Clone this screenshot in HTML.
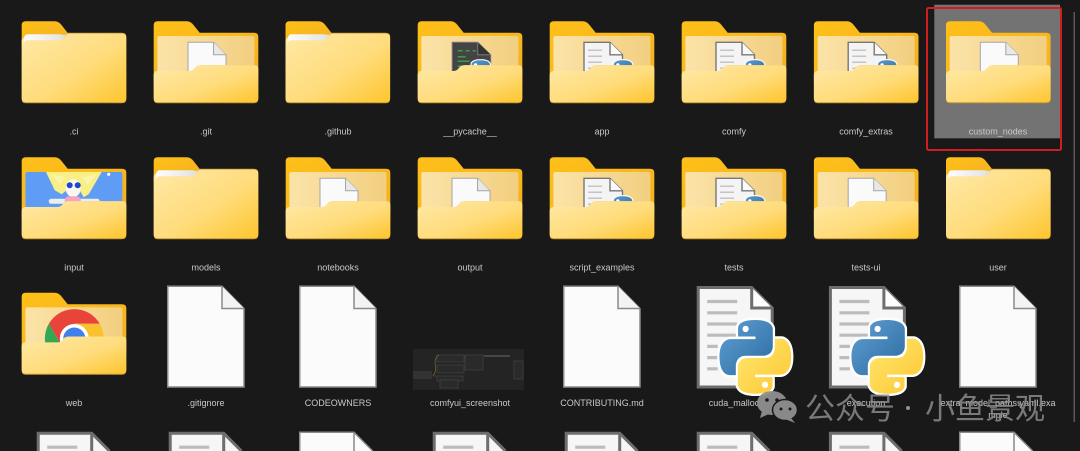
<!DOCTYPE html>
<html><head><meta charset="utf-8">
<style>
html,body{margin:0;padding:0;background:#191919;width:1080px;height:451px;overflow:hidden}
svg{display:block;filter:blur(.35px)}
.l text{font-family:"Liberation Sans",sans-serif;font-size:9px;fill:#c9c9c9;text-anchor:middle}
.w{font-family:"Liberation Sans","Noto Sans CJK SC",sans-serif;font-size:30px;fill:#8a8a8a;opacity:.85}
</style></head><body>
<svg width="1080" height="451" viewBox="0 0 1080 451" xmlns="http://www.w3.org/2000/svg">
<defs>
<linearGradient id="gf" x1="0" y1="0" x2="1" y2="1"><stop offset="0" stop-color="#ffe9a6"/><stop offset=".55" stop-color="#ffdc7c"/><stop offset="1" stop-color="#fec62e"/></linearGradient>
<linearGradient id="gt" x1="0" y1="0" x2="1" y2="1"><stop offset="0" stop-color="#fec018"/><stop offset="1" stop-color="#f4b021"/></linearGradient>
<linearGradient id="gp" x1="0" y1="0" x2="1" y2="0"><stop offset="0" stop-color="#fbe3a8"/><stop offset="1" stop-color="#f2cf80"/></linearGradient>
<linearGradient id="gb" x1="0" y1="0" x2="1" y2="1"><stop offset="0" stop-color="#5fa0d4"/><stop offset="1" stop-color="#2c6a9f"/></linearGradient>
<linearGradient id="gy" x1="0" y1="0" x2="1" y2="1"><stop offset="0" stop-color="#ffe873"/><stop offset="1" stop-color="#fdc62f"/></linearGradient>
<linearGradient id="gs" x1="0" y1="0" x2="1" y2="0"><stop offset="0" stop-color="#fdfdfd"/><stop offset=".8" stop-color="#e6e6e6"/><stop offset="1" stop-color="#f5d98a"/></linearGradient>

<g id="back">
<path d="M0 4Q0 0 4 0H33Q37 0 40 4L46 11.5H100Q104.6 11.5 104.6 15V60H0Z" fill="url(#gt)"/>
<rect x="3.7" y="14.7" width="97" height="45" rx="2" fill="url(#gp)"/>
</g>
<g id="front">
<path d="M0 54Q0 50 4 50H36Q39 50 41 47.2Q43 44 47 44H101Q104.6 44 104.6 48V78Q104.6 82 100 82H4Q0 82 0 78Z" fill="#c79a30"/>
<path d="M0 53.5Q0 49.7 4 49.7H36Q39 49.7 41 47Q43 43.8 47 43.8H101Q104.6 43.8 104.6 47.5V77Q104.6 81 100 81H4Q0 81 0 77Z" fill="url(#gf)"/>
</g>
<g id="closed">
<path d="M0 4Q0 0 4 0H33Q37 0 40 4L47 13H40V24H0Z" fill="url(#gt)"/>
<path d="M0 20Q0 16 4 16H40L46 11.5H100Q104.6 11.5 104.6 15V78Q104.6 82 100 82H4Q0 82 0 78Z" fill="#c79a30"/>
<path d="M0 20Q0 16 4 16H40L46 12.2H100Q104.6 12.2 104.6 16V77Q104.6 81 100 81H4Q0 81 0 77Z" fill="url(#gf)"/>
<path d="M2 20Q2 13 6 13H46Q44 18.5 38 19H6Q3 19 2 22Z" fill="url(#gs)"/>
</g>
<g id="mb">
<path d="M0 0H25.5L38 12.5V50H0Z" fill="#fafafa" stroke="#a5a5a5" stroke-width="1"/>
<path d="M25.5 0V12.5H38" fill="#e8e8e8" stroke="#a5a5a5" stroke-width="1"/>
</g>
<g id="mp">
<path d="M0 0H26L38.5 12.5V50H0Z" fill="#f4f4f4" stroke="#777" stroke-width="1.4"/>
<path d="M26 0V12.5H38.5" fill="#fafafa" stroke="#777" stroke-width="1.4"/>
<path d="M4 8H18M4 14H18M4 20H18M4 26H10M4 31H10" stroke="#c4c4c4" stroke-width="1.5"/>
<use href="#py" transform="translate(20 18) scale(.345)"/>
</g>
<g id="py">
<path d="M54.9 0C26.9 0 28.6 12.1 28.6 12.1v12.6h26.7v3.8H18C18 28.5 0 26.4 0 54.8c0 28.4 15.7 27.4 15.7 27.4h9.4V69s-.5-15.7 15.4-15.7h26.6s14.9.2 14.9-14.4V14.8S84.3 0 54.9 0z" fill="#fff" stroke="#fff" stroke-width="7" stroke-linejoin="round"/>
<path d="M55.3 110c28 0 26.3-12.1 26.3-12.1V85.3H54.9v-3.8h37.3s18 2 18-26.3c0-28.4-15.7-27.4-15.7-27.4h-9.4V41s.5 15.7-15.4 15.7H43.1s-14.9-.2-14.9 14.4v24.1S26 110 55.3 110z" fill="#fff" stroke="#fff" stroke-width="7" stroke-linejoin="round"/>
<path d="M54.9 0C26.9 0 28.6 12.1 28.6 12.1v12.6h26.7v3.8H18C18 28.5 0 26.4 0 54.8c0 28.4 15.7 27.4 15.7 27.4h9.4V69s-.5-15.7 15.4-15.7h26.6s14.9.2 14.9-14.4V14.8S84.3 0 54.9 0z" fill="url(#gb)"/>
<path d="M55.3 110c28 0 26.3-12.1 26.3-12.1V85.3H54.9v-3.8h37.3s18 2 18-26.3c0-28.4-15.7-27.4-15.7-27.4h-9.4V41s.5 15.7-15.4 15.7H43.1s-14.9-.2-14.9 14.4v24.1S26 110 55.3 110z" fill="url(#gy)"/>
<circle cx="40.2" cy="13.3" r="4.8" fill="#fff"/><circle cx="70" cy="96.7" r="4.8" fill="#fff"/>
</g>
<g id="fb"><use href="#back"/><use href="#mb" transform="translate(34.3 21)"/><use href="#front"/></g>
<g id="fp"><use href="#back"/><use href="#mp" transform="translate(34.3 21)"/><use href="#front"/></g>
<g id="blank">
<path d="M.75.75H55L77 23V101.5H.75Z" fill="#fbfbfb" stroke="#8a8a8a" stroke-width="1.5"/>
<path d="M55 .75V23H77" fill="#f3f3f3" stroke="#8a8a8a" stroke-width="1.5"/>
</g>
<g id="pdoc">
<path d="M1.5 1.5H55L75.5 22V101H1.5Z" fill="#f6f6f6" stroke="#6d6d6d" stroke-width="3"/>
<path d="M55 1.5V22H75.5" fill="#fdfdfd" stroke="#6d6d6d" stroke-width="3"/>
<path d="M10.5 15.5H40.5M10.5 26.8H40.5M10.5 38H40.5M10.5 49.2H40.5M10.5 60.4H21M10.5 71.6H21M10.5 82.8H21" stroke="#bcbcbc" stroke-width="3.2"/>
</g>
<g id="blank4">
<path d="M.75 19.5V.75H55L73.7 19.5Z" fill="#fbfbfb"/>
<path d="M.75 19.5V.75H55L73.7 19.5" fill="none" stroke="#8a8a8a" stroke-width="1.5"/>
<path d="M55 .75V19.5" stroke="#8a8a8a" stroke-width="1.5"/>
</g>
<g id="pdoc4">
<path d="M1.5 19.3V1.5H55L72.8 19.3Z" fill="#f6f6f6"/>
<path d="M1.5 19.3V1.5H55L72.8 19.3" fill="none" stroke="#6d6d6d" stroke-width="3"/>
<path d="M55 1.5V19.3" stroke="#6d6d6d" stroke-width="3"/>
<path d="M10.5 15.5H40.5" stroke="#bcbcbc" stroke-width="3.2"/>
</g>
</defs>

<rect width="1080" height="451" fill="#191919"/>
<rect x="934.3" y="4.7" width="125.7" height="133.6" fill="#737373"/>
<rect x="927" y="8" width="134" height="142" rx="1.5" fill="none" stroke="#cf1f1c" stroke-width="2"/>
<rect x="1073.6" y="12" width="1.2" height="410" fill="#6a6a6a"/>

<!-- row 1 -->
<use href="#closed" transform="translate(21.7 21.3)"/>
<use href="#fb" transform="translate(153.7 21.3)"/>
<use href="#closed" transform="translate(285.5 21.3)"/>
<g transform="translate(417.7 21.3)">
<use href="#back"/>
<path d="M34.5 21H60L73 33.5V55H34.5Z" fill="#444" stroke="#7a7a7a" stroke-width="1"/>
<path d="M60 21V33.5H73" fill="#333" stroke="#7a7a7a" stroke-width="1"/>
<path d="M40 29.5H45M48 29.5H52M55 29.5H58M40 35.5H48M40 40H52M40 45H50" stroke="#35a044" stroke-width="1.5"/>
<use href="#py" transform="translate(44 39) scale(.345)"/>
<use href="#front"/>
</g>
<use href="#fp" transform="translate(549.7 21.3)"/>
<use href="#fp" transform="translate(681.7 21.3)"/>
<use href="#fp" transform="translate(813.9 21.3)"/>
<use href="#fb" transform="translate(946 21.3)"/>

<!-- row 2 -->
<g transform="translate(21.7 157.3)">
<use href="#back"/>
<rect x="3.7" y="14.7" width="97" height="45" rx="2" fill="#5e9cf6"/>
<path d="M24.3 14.7H80L67 37L62 40L58 33H45L40 37L33 33Z" fill="#f8ef86"/>
<path d="M30 17L38 27L44 20ZM75 17L66 27L60 20Z" fill="#fbf5a8"/>
<ellipse cx="51.5" cy="31" rx="7.5" ry="9" fill="#fdf6ee"/>
<circle cx="48" cy="28" r="3" fill="#1a48cf"/><circle cx="56" cy="28" r="3" fill="#1a48cf"/>
<rect x="27" y="41.5" width="51" height="5" rx="2.5" fill="#eeeeee"/>
<rect x="43" y="39" width="16" height="12" rx="4" fill="#f2a6c4"/>
<circle cx="87" cy="17" r="1.6" fill="#fff"/>
<use href="#front"/>
</g>
<use href="#closed" transform="translate(153.7 157.3)"/>
<use href="#fb" transform="translate(285.7 157.3)"/>
<use href="#fb" transform="translate(417.7 157.3)"/>
<use href="#fp" transform="translate(549.7 157.3)"/>
<use href="#fp" transform="translate(681.7 157.3)"/>
<use href="#fb" transform="translate(813.9 157.3)"/>
<use href="#closed" transform="translate(946 157.3)"/>

<!-- row 3 -->
<g transform="translate(21.7 292.7)">
<use href="#back"/>
<g transform="translate(52.6 45.8)">
<path d="M-25.5 -14.7A29.5 29.5 0 0 1 25.5 -14.7H0L-12.7 7.3Z" fill="#e8443a"/>
<path d="M-25.5 -14.7A29.5 29.5 0 0 0 0 29.5L12.7 7L-12.7 7.3Z" fill="#33a853"/>
<path d="M25.5 -14.7A29.5 29.5 0 0 1 0 29.5L12.7 7L0 -14.7Z" fill="#fbc02d"/>
<circle r="14.5" fill="#fff"/><circle r="11" fill="#3f80ea"/>
</g>
<use href="#front"/>
</g>
<use href="#blank" transform="translate(167 285.5)"/>
<use href="#blank" transform="translate(299 285.5)"/>
<g transform="translate(413 349)">
<rect width="111" height="41" fill="#242424"/>
<rect x="0" y="22" width="19" height="8" fill="#333"/>
<g fill="#2a2a2a" stroke="#444" stroke-width=".7">
<rect x="24" y="6" width="27" height="7"/><rect x="24" y="16" width="27" height="8"/><rect x="24" y="27" width="26" height="5"/>
<rect x="27" y="31" width="18" height="8"/><rect x="52" y="6" width="18" height="15"/><rect x="101" y="12" width="9" height="18"/>
</g>
<path d="M20 27Q24 22 22 14Q22 8 26 6" stroke="#6d6232" fill="none" stroke-width=".8"/>
<path d="M20 27H24M51 8H53" stroke="#6b3636" stroke-width=".8"/>
<path d="M71 7H97" stroke="#45454f" stroke-width="2"/>
</g>
<use href="#blank" transform="translate(563 285.5)"/>
<use href="#pdoc" transform="translate(696.7 286)"/>
<use href="#pdoc" transform="translate(828.9 286)"/>
<use href="#blank" transform="translate(959 285.5)"/>
<use href="#py" transform="translate(719.5 320) scale(.65 .67)"/>
<use href="#py" transform="translate(851.5 320) scale(.65 .67)"/>

<!-- row 4 -->
<use href="#pdoc4" transform="translate(36.7 431.7)"/>
<use href="#pdoc4" transform="translate(168.7 431.7)"/>
<use href="#blank4" transform="translate(299 431.5)"/>
<use href="#pdoc4" transform="translate(432.7 431.7)"/>
<use href="#pdoc4" transform="translate(564.7 431.7)"/>
<use href="#pdoc4" transform="translate(696.7 431.7)"/>
<use href="#pdoc4" transform="translate(828.9 431.7)"/>
<use href="#blank4" transform="translate(959 431.5)"/>

<g class="l">
<text x="74" y="134.5">.ci</text><text x="206" y="134.5">.git</text><text x="338" y="134.5">.github</text><text x="470" y="134.5">__pycache__</text><text x="602" y="134.5">app</text><text x="734" y="134.5">comfy</text><text x="866" y="134.5">comfy_extras</text><text x="998" y="134.5">custom_nodes</text>
<text x="74" y="270.5">input</text><text x="206" y="270.5">models</text><text x="338" y="270.5">notebooks</text><text x="470" y="270.5">output</text><text x="602" y="270.5">script_examples</text><text x="734" y="270.5">tests</text><text x="866" y="270.5">tests-ui</text><text x="998" y="270.5">user</text>
<text x="74" y="406">web</text><text x="206" y="406">.gitignore</text><text x="338" y="406">CODEOWNERS</text><text x="470" y="406">comfyui_screenshot</text><text x="602" y="406">CONTRIBUTING.md</text><text x="734" y="406">cuda_malloc</text><text x="866" y="406">execution</text><text x="998" y="406">extra_model_paths.yaml.exa</text><text x="998" y="418">mple</text>
</g>

<!-- watermark -->
<g fill="#8f8f8f" opacity=".95">
<ellipse cx="772" cy="403" rx="15" ry="12"/><path d="M762 411L760 418L769 414Z"/>
<ellipse cx="785" cy="410" rx="12.5" ry="10.5" stroke="#191919" stroke-width="1.5"/><path d="M791 418L795 423L785 419Z"/>
</g>
<circle cx="767" cy="400" r="1.8" fill="#191919"/><circle cx="777" cy="400" r="1.8" fill="#191919"/>
<circle cx="781" cy="409" r="1.5" fill="#191919"/><circle cx="790" cy="409" r="1.5" fill="#191919"/>
<text class="w" x="805" y="419">公众号</text>
<circle cx="908" cy="408" r="2" fill="#8f8f8f"/>
<text class="w" x="925" y="419">小鱼景观</text>
</svg>
</body></html>
